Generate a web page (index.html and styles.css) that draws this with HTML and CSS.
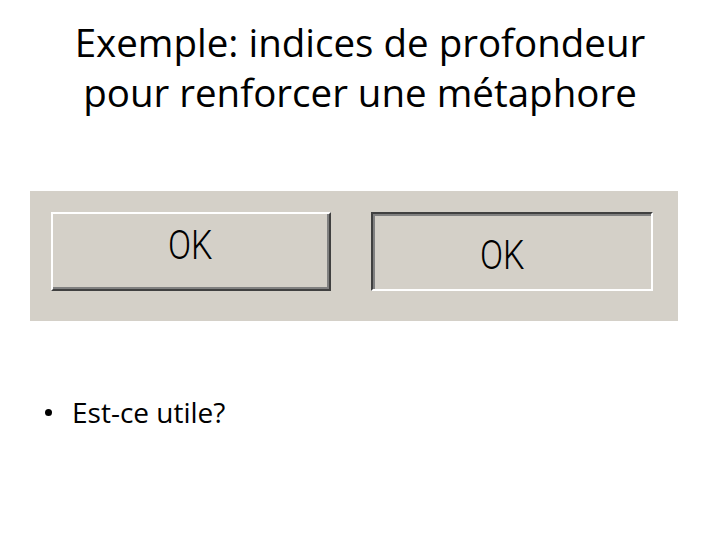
FILE: index.html
```html
<!DOCTYPE html>
<html lang="fr">
<head>
<meta charset="utf-8">
<title>Exemple</title>
<link rel="stylesheet" href="styles.css">
</head>
<body>
<h1 class="title">Exemple: indices de profondeur<br>pour renforcer une métaphore</h1>
<div class="panel">
  <div class="btn btn-raised"><span class="label">OK</span></div>
  <div class="btn btn-pressed"><span class="label">OK</span></div>
</div>
<ul class="bullets">
  <li>Est-ce utile?</li>
</ul>
</body>
</html>
```

FILE: styles.css
```css
html, body {
  margin: 0;
  padding: 0;
  background: #ffffff;
}
body {
  width: 720px;
  height: 540px;
  overflow: hidden;
  font-family: "Open Sans", "Liberation Sans", sans-serif;
  color: #000;
}
.title {
  margin: 17px 0 0 0;
  font-family: "Open Sans", sans-serif;
  font-weight: 400;
  font-size: 38.5px;
  line-height: 50px;
  text-align: center;
  letter-spacing: 0;
}
.panel {
  margin: 74px 0 0 30px;
  width: 648px;
  height: 130px;
  box-sizing: border-box;
  background: #d4d0c8;
  padding: 21px 0 0 21px;
  display: flex;
  gap: 40px;
  align-items: flex-start;
}
.btn {
  box-sizing: border-box;
  height: 79px;
  border-style: solid;
  border-width: 2px;
}
.btn-raised {
  width: 280px;
  border-color: #ffffff #404040 #404040 #ffffff;
  box-shadow: inset -2px -2px 0 #808080;
  padding: 11px 0 0 115px;
}
.btn-pressed {
  width: 282px;
  border-color: #404040 #ffffff #ffffff #404040;
  box-shadow: inset 2px 2px 0 #808080;
  padding: 21px 0 0 107px;
}
.label {
  display: inline-block;
  font-family: "Roboto", "Liberation Sans", sans-serif;
  font-weight: 300;
  font-size: 41px;
  line-height: 40px;
  transform: scaleX(0.83);
  transform-origin: left top;
}
.bullets {
  margin: 74px 0 0 0;
  padding: 0 0 0 72px;
  font-family: "Open Sans", sans-serif;
  font-size: 28px;
  line-height: 34px;
}
.bullets li {
  list-style: none;
  position: relative;
}
.bullets li::before {
  content: "";
  position: absolute;
  left: -27px;
  top: 14px;
  width: 7px;
  height: 7px;
  border-radius: 50%;
  background: #000;
}
```
